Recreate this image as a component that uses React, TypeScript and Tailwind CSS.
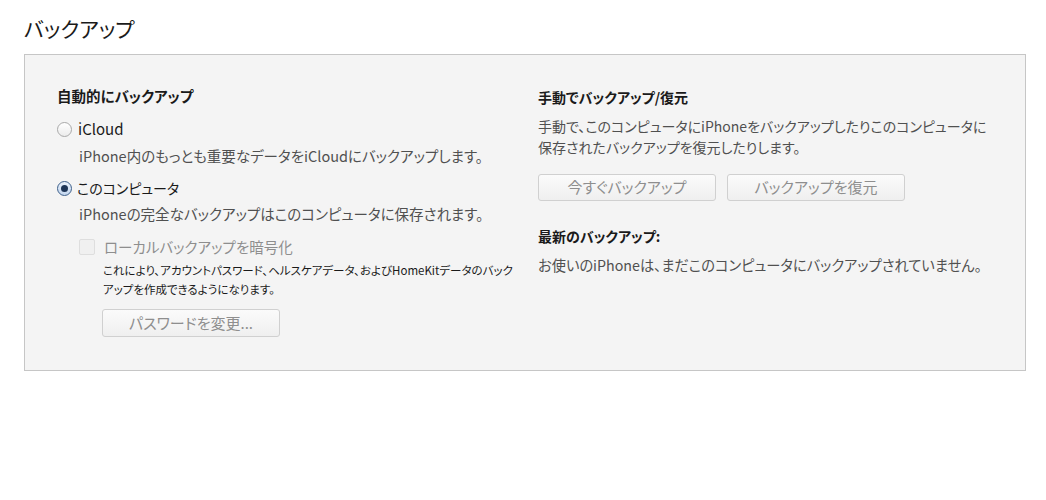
import React from "react";

const font = "[font-family:'Noto_Sans_CJK_JP','Noto_Sans',sans-serif] [font-feature-settings:'palt']";

const Radio = ({ checked }: { checked?: boolean }) => (
  <span
    className={
      "flex h-[15px] w-[15px] items-center justify-center rounded-full border " +
      (checked
        ? "border-[#3d5f8a] bg-gradient-to-b from-[#e9f1fb] to-[#c3d6ee]"
        : "border-[#a9a9a9] bg-gradient-to-b from-[#ffffff] to-[#ececec]")
    }
  >
    {checked && <span className="h-[7px] w-[7px] rounded-full bg-[#1d3557]" />}
  </span>
);

const Btn = ({ label }: { label: string }) => (
  <button className="flex h-[27px] w-[178px] items-center justify-center rounded-[3px] border border-[#d0d0d0] bg-gradient-to-b from-[#fbfbfb] to-[#efefef] text-[15px] text-[#8e8e8e]">
    {label}
  </button>
);

export default function App() {
  return (
    <div className={"min-h-screen bg-white pl-6 pr-5 pt-[12px] " + font}>
      {/* Title */}
      <h1 className="h-[33px] text-[21px] leading-[33px] text-[#1a1a1a]">バックアップ</h1>

      <div className="mt-[9px] h-[317px] w-[1002px] border border-[#c6c6c6] bg-[#f4f4f4] pl-[32px] pt-[31px]">
        <div className="grid grid-cols-[481px_1fr]">
          {/* Left column */}
          <div>
            <div className="flex h-5 items-center text-[14.5px] font-bold text-[#1a1a1a]">自動的にバックアップ</div>

            <div className="mt-[13px] flex h-5 items-center gap-[6px] text-[15px] text-[#1a1a1a]">
              <Radio />
              <span>iCloud</span>
            </div>
            <div className="mt-[7px] flex h-5 items-center pl-[22px] text-[14.5px] text-[#505050]">
              iPhone内のもっとも重要なデータをiCloudにバックアップします。
            </div>

            <div className="mt-[12px] flex h-5 items-center gap-[5px] text-[14px] text-[#1a1a1a]">
              <Radio checked />
              <span>このコンピュータ</span>
            </div>
            <div className="mt-[6px] flex h-5 items-center pl-[22px] text-[14.5px] text-[#505050]">
              iPhoneの完全なバックアップはこのコンピュータに保存されます。
            </div>

            <div className="mt-[13px] flex h-5 items-center gap-[9px] pl-[22px] text-[14.5px] text-[#8e8e8e]">
              <span className="h-4 w-4 rounded-[2px] border border-[#dedede] bg-[#f0f0f0]" />
              <span>ローカルバックアップを暗号化</span>
            </div>
            <p className="mt-[4px] whitespace-nowrap pl-[46px] text-[11.5px] leading-[19px] text-[#1a1a1a]">
              これにより、アカウントパスワード、ヘルスケアデータ、およびHomeKitデータのバック
              <br />
              アップを作成できるようになります。
            </p>
            <div className="mt-[10px] pl-[45px]">
              <button className="flex h-[28px] w-[178px] items-center justify-center rounded-[3px] border border-[#d0d0d0] bg-gradient-to-b from-[#fbfbfb] to-[#efefef] text-[15px] text-[#8e8e8e]">
                パスワードを変更...
              </button>
            </div>
          </div>

          {/* Right column */}
          <div className="pt-px">
            <div className="flex h-5 items-center text-[14px] font-bold text-[#1a1a1a]">手動でバックアップ/復元</div>
            <p className="mt-[9px] w-[460px] text-[14px] leading-[21px] text-[#505050]">
              手動で、このコンピュータにiPhoneをバックアップしたりこのコンピュータに保存されたバックアップを復元したりします。
            </p>
            <div className="mt-[16px] flex gap-[11px]">
              <Btn label="今すぐバックアップ" />
              <Btn label="バックアップを復元" />
            </div>
            <div className="mt-[25px] flex h-5 items-center text-[14px] font-bold text-[#1a1a1a]">最新のバックアップ:</div>
            <div className="mt-[9px] flex h-5 items-center text-[14.25px] text-[#505050]">
              お使いのiPhoneは、まだこのコンピュータにバックアップされていません。
            </div>
          </div>
        </div>
      </div>
    </div>
  );
}
